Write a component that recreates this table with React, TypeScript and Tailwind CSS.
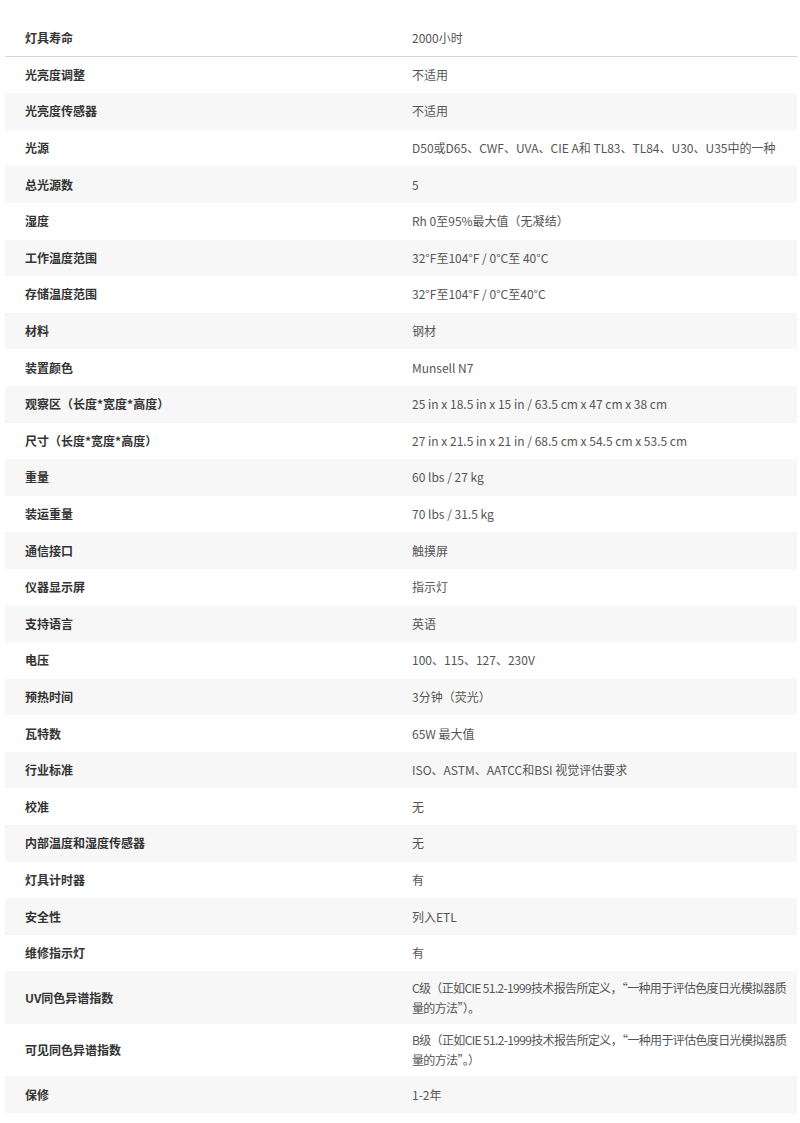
const specs: [string, string[]][] = [
  ["灯具寿命", ["2000小时"]],
  ["光亮度调整", ["不适用"]],
  ["光亮度传感器", ["不适用"]],
  ["光源", ["D50或D65、CWF、UVA、CIE A和 TL83、TL84、U30、U35中的一种"]],
  ["总光源数", ["5"]],
  ["湿度", ["Rh 0至95%最大值（无凝结）"]],
  ["工作温度范围", ["32°F至104°F / 0°C至 40°C"]],
  ["存储温度范围", ["32°F至104°F / 0°C至40°C"]],
  ["材料", ["钢材"]],
  ["装置颜色", ["Munsell N7"]],
  ["观察区（长度*宽度*高度）", ["25 in x 18.5 in x 15 in / 63.5 cm x 47 cm x 38 cm"]],
  ["尺寸（长度*宽度*高度）", ["27 in x 21.5 in x 21 in / 68.5 cm x 54.5 cm x 53.5 cm"]],
  ["重量", ["60 lbs / 27 kg"]],
  ["装运重量", ["70 lbs / 31.5 kg"]],
  ["通信接口", ["触摸屏"]],
  ["仪器显示屏", ["指示灯"]],
  ["支持语言", ["英语"]],
  ["电压", ["100、115、127、230V"]],
  ["预热时间", ["3分钟（荧光）"]],
  ["瓦特数", ["65W 最大值"]],
  ["行业标准", ["ISO、ASTM、AATCC和BSI 视觉评估要求"]],
  ["校准", ["无"]],
  ["内部温度和湿度传感器", ["无"]],
  ["灯具计时器", ["有"]],
  ["安全性", ["列入ETL"]],
  ["维修指示灯", ["有"]],
  ["UV同色异谱指数", ["C级（正如CIE 51.2-1999技术报告所定义，“一种用于评估色度日光模拟器质", "量的方法”）。"]],
  ["可见同色异谱指数", ["B级（正如CIE 51.2-1999技术报告所定义，“一种用于评估色度日光模拟器质", "量的方法”。）"]],
  ["保修", ["1-2年"]],
];

export default function App() {
  return (
    <div className="min-h-[1123px] w-[800px] bg-white px-[5px] pt-[20px] font-['Noto_Sans_CJK_SC',sans-serif] text-[12px]">
      <div className="w-[792px]">
        {specs.map(([label, lines], i) => (
          <div
            key={label}
            className={
              "grid grid-cols-[387px_1fr] " +
              (i === 0 ? "border-b border-[#d4d4d4] " : "") +
              (i > 0 && i % 2 === 0 ? "bg-[#f7f7f7] " : "bg-white ") +
              (lines.length > 1 ? "min-h-[52.5px]" : "min-h-[36.6px]")
            }
          >
            <div className="flex items-center pl-5 font-bold text-[#333]">{label}</div>
            <div className="flex flex-col justify-center py-[6px] pr-[8px] pl-[20px] leading-[20px] text-[#555]">
              {lines.map((line) => (
                <span key={line} className={lines.length > 1 ? "whitespace-nowrap tracking-[-0.65px]" : ""}>
                  {line}
                </span>
              ))}
            </div>
          </div>
        ))}
      </div>
    </div>
  );
}
